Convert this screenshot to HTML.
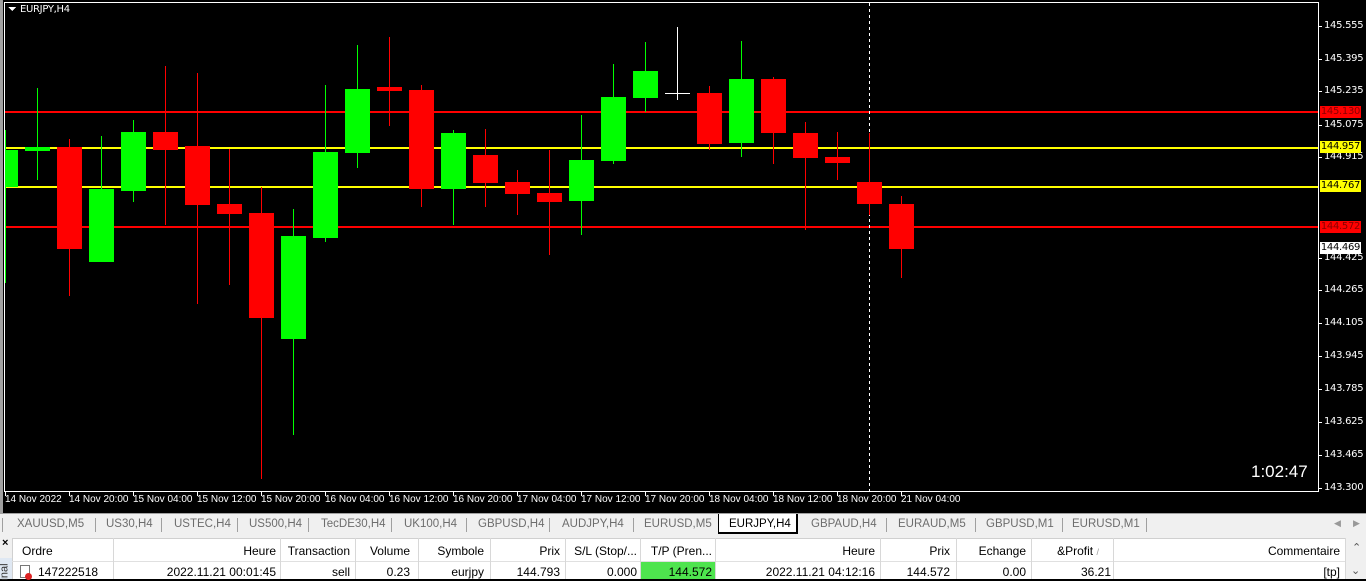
<!DOCTYPE html>
<html><head><meta charset="utf-8"><style>
*{margin:0;padding:0;box-sizing:border-box}
body{width:1366px;height:579px;overflow:hidden;background:#000;font-family:"Liberation Sans",sans-serif;position:relative}
.ax{position:absolute;color:#fff;font-size:10px;font-family:"DejaVu Sans","Liberation Sans",sans-serif;letter-spacing:-0.3px}
.tl{font-family:"Liberation Sans",sans-serif;letter-spacing:0}
.pl{left:1324px}
.tag{position:absolute;left:1320px;width:41px;height:12px;font-size:10px;font-family:"DejaVu Sans",sans-serif;line-height:12px;text-align:center;letter-spacing:-0.3px}
#tabs{position:absolute;left:0;top:513px;width:1366px;height:23px;background:#f0f0f0;border-top:1px solid #a0a0a0;font-size:11.5px;color:#6d6d6d}
#tabs span{position:absolute;top:4px}
.sep{position:absolute;top:4px;width:1px;height:14px;background:#a0a0a0}
#tbl{position:absolute;left:0;top:536px;width:1366px;height:43px;background:#f0f0f0}
.c{position:absolute;font-size:12px;color:#000;white-space:nowrap}
.vl{position:absolute;width:1px;background:#d8d8d8}
</style></head><body>
<svg width="1366" height="513" style="position:absolute;left:0;top:0" shape-rendering="crispEdges">
<rect width="1366" height="513" fill="#000"/>
<rect x="0" y="0" width="3" height="513" fill="#a0a0a0"/>
<rect x="4.5" y="2.5" width="1314" height="489" fill="none" stroke="#fff" stroke-width="1"/>
<g fill="#fff">
<rect x="1319" y="26" width="3" height="1"/><rect x="1319" y="59" width="3" height="1"/><rect x="1319" y="91" width="3" height="1"/><rect x="1319" y="125" width="3" height="1"/><rect x="1319" y="157" width="3" height="1"/><rect x="1319" y="258" width="3" height="1"/><rect x="1319" y="290" width="3" height="1"/><rect x="1319" y="323" width="3" height="1"/><rect x="1319" y="356" width="3" height="1"/><rect x="1319" y="389" width="3" height="1"/><rect x="1319" y="422" width="3" height="1"/><rect x="1319" y="455" width="3" height="1"/><rect x="1319" y="488" width="3" height="1"/>
<rect x="5" y="492" width="1" height="4"/><rect x="69" y="492" width="1" height="4"/><rect x="133" y="492" width="1" height="4"/><rect x="197" y="492" width="1" height="4"/><rect x="261" y="492" width="1" height="4"/><rect x="325" y="492" width="1" height="4"/><rect x="389" y="492" width="1" height="4"/><rect x="453" y="492" width="1" height="4"/><rect x="517" y="492" width="1" height="4"/><rect x="581" y="492" width="1" height="4"/><rect x="645" y="492" width="1" height="4"/><rect x="709" y="492" width="1" height="4"/><rect x="773" y="492" width="1" height="4"/><rect x="837" y="492" width="1" height="4"/><rect x="901" y="492" width="1" height="4"/>
</g>
<polygon points="8,7 16,7 12,11" fill="#fff"/>
<rect x="5" y="111" width="1313" height="2" fill="#f00"/>
<rect x="5" y="226" width="1313" height="2" fill="#f00"/>
<rect x="5" y="147" width="1313" height="2" fill="#ff0"/>
<rect x="5" y="186" width="1313" height="2" fill="#ff0"/>
<line x1="869.5" y1="3" x2="869.5" y2="491" stroke="#fff" stroke-dasharray="3,3"/>
<g fill="#0f0">
<rect x="5" y="130" width="1" height="153"/><rect x="5" y="150" width="13" height="37"/>
<rect x="37" y="88" width="1" height="92"/><rect x="25" y="147" width="25" height="4"/>
<rect x="101" y="136" width="1" height="126"/><rect x="89" y="189" width="25" height="73"/>
<rect x="133" y="120" width="1" height="82"/><rect x="121" y="132" width="25" height="59"/>
<rect x="293" y="209" width="1" height="226"/><rect x="281" y="236" width="25" height="103"/>
<rect x="325" y="85" width="1" height="157"/><rect x="313" y="152" width="25" height="86"/>
<rect x="357" y="45" width="1" height="123"/><rect x="345" y="89" width="25" height="64"/>
<rect x="453" y="130" width="1" height="95"/><rect x="441" y="133" width="25" height="56"/>
<rect x="581" y="115" width="1" height="120"/><rect x="569" y="160" width="25" height="41"/>
<rect x="613" y="64" width="1" height="100"/><rect x="601" y="97" width="25" height="64"/>
<rect x="645" y="42" width="1" height="70"/><rect x="633" y="71" width="25" height="27"/>
<rect x="741" y="41" width="1" height="116"/><rect x="729" y="79" width="25" height="64"/>
</g>
<g fill="#f00">
<rect x="69" y="139" width="1" height="157"/><rect x="57" y="147" width="25" height="102"/>
<rect x="165" y="66" width="1" height="159"/><rect x="153" y="132" width="25" height="18"/>
<rect x="197" y="73" width="1" height="231"/><rect x="185" y="146" width="25" height="59"/>
<rect x="229" y="149" width="1" height="136"/><rect x="217" y="204" width="25" height="10"/>
<rect x="261" y="187" width="1" height="292"/><rect x="249" y="213" width="25" height="105"/>
<rect x="389" y="37" width="1" height="89"/><rect x="377" y="87" width="25" height="4"/>
<rect x="421" y="85" width="1" height="122"/><rect x="409" y="90" width="25" height="99"/>
<rect x="485" y="129" width="1" height="78"/><rect x="473" y="155" width="25" height="28"/>
<rect x="517" y="170" width="1" height="45"/><rect x="505" y="182" width="25" height="12"/>
<rect x="549" y="150" width="1" height="105"/><rect x="537" y="193" width="25" height="9"/>
<rect x="709" y="86" width="1" height="64"/><rect x="697" y="93" width="25" height="51"/>
<rect x="773" y="77" width="1" height="87"/><rect x="761" y="79" width="25" height="54"/>
<rect x="805" y="122" width="1" height="108"/><rect x="793" y="133" width="25" height="25"/>
<rect x="837" y="132" width="1" height="48"/><rect x="825" y="157" width="25" height="6"/>
<rect x="869" y="133" width="1" height="82"/><rect x="857" y="182" width="25" height="22"/>
<rect x="901" y="196" width="1" height="82"/><rect x="889" y="204" width="25" height="45"/>
</g>
<rect x="677" y="27" width="1" height="73" fill="#fff"/><rect x="665" y="93" width="25" height="1" fill="#fff"/>
</svg>
<div class="ax" style="left:20px;top:4px">EURJPY,H4</div>
<div class="ax pl" style="top:20px">145.555</div>
<div class="ax pl" style="top:53px">145.395</div>
<div class="ax pl" style="top:85px">145.235</div>
<div class="ax pl" style="top:119px">145.075</div>
<div class="ax pl" style="top:151px">144.915</div>
<div class="ax pl" style="top:252px">144.425</div>
<div class="ax pl" style="top:284px">144.265</div>
<div class="ax pl" style="top:317px">144.105</div>
<div class="ax pl" style="top:350px">143.945</div>
<div class="ax pl" style="top:383px">143.785</div>
<div class="ax pl" style="top:416px">143.625</div>
<div class="ax pl" style="top:449px">143.465</div>
<div class="ax pl" style="top:482px">143.300</div>
<div class="tag" style="top:106px;background:#f00;color:#800">145.130</div>
<div class="tag" style="top:141px;background:#ff0;color:#000">144.957</div>
<div class="tag" style="top:180px;background:#ff0;color:#000">144.767</div>
<div class="tag" style="top:221px;background:#f00;color:#800">144.572</div>
<div class="tag" style="top:242px;background:#fff;color:#000">144.469</div>
<div class="ax" style="left:1251px;top:462px;font-size:17px;font-family:'Liberation Sans',sans-serif;letter-spacing:0">1:02:47</div>
<div class="ax tl" style="left:5px;top:494px">14 Nov 2022</div>
<div class="ax tl" style="left:69px;top:494px">14 Nov 20:00</div>
<div class="ax tl" style="left:133px;top:494px">15 Nov 04:00</div>
<div class="ax tl" style="left:197px;top:494px">15 Nov 12:00</div>
<div class="ax tl" style="left:261px;top:494px">15 Nov 20:00</div>
<div class="ax tl" style="left:325px;top:494px">16 Nov 04:00</div>
<div class="ax tl" style="left:389px;top:494px">16 Nov 12:00</div>
<div class="ax tl" style="left:453px;top:494px">16 Nov 20:00</div>
<div class="ax tl" style="left:517px;top:494px">17 Nov 04:00</div>
<div class="ax tl" style="left:581px;top:494px">17 Nov 12:00</div>
<div class="ax tl" style="left:645px;top:494px">17 Nov 20:00</div>
<div class="ax tl" style="left:709px;top:494px">18 Nov 04:00</div>
<div class="ax tl" style="left:773px;top:494px">18 Nov 12:00</div>
<div class="ax tl" style="left:837px;top:494px">18 Nov 20:00</div>
<div class="ax tl" style="left:901px;top:494px">21 Nov 04:00</div>

<div id="tabs">
<div class="sep" style="left:2px"></div>
<span style="left:17px">XAUUSD,M5</span><div class="sep" style="left:95px"></div>
<span style="left:106px">US30,H4</span><div class="sep" style="left:161px"></div>
<span style="left:174px">USTEC,H4</span><div class="sep" style="left:237px"></div>
<span style="left:249px">US500,H4</span><div class="sep" style="left:308px"></div>
<span style="left:321px">TecDE30,H4</span><div class="sep" style="left:391px"></div>
<span style="left:404px">UK100,H4</span><div class="sep" style="left:466px"></div>
<span style="left:478px">GBPUSD,H4</span><div class="sep" style="left:549px"></div>
<span style="left:562px">AUDJPY,H4</span><div class="sep" style="left:633px"></div>
<span style="left:644px">EURUSD,M5</span>
<div style="position:absolute;left:718px;top:0;width:80px;height:20px;background:#fff;border:1px solid #000;border-top:none;border-right:2px solid #000;border-bottom:2px solid #000"></div>
<span style="left:729px;color:#000">EURJPY,H4</span>
<span style="left:811px">GBPAUD,H4</span><div class="sep" style="left:886px"></div>
<span style="left:898px">EURAUD,M5</span><div class="sep" style="left:975px"></div>
<span style="left:986px">GBPUSD,M1</span><div class="sep" style="left:1062px"></div>
<span style="left:1072px">EURUSD,M1</span><div class="sep" style="left:1146px"></div>
<span style="left:1334px;font-size:9px;color:#999">◀</span><span style="left:1353px;font-size:9px;color:#999">▶</span>
</div>

<div id="tbl">
<div style="position:absolute;left:12px;top:2px;width:1334px;height:41px;background:#fff;border-top:1px solid #d0d0d0;border-left:1px solid #d0d0d0"></div>
<div style="position:absolute;left:12px;top:25px;width:1334px;height:1px;background:#e0e0e0"></div>
<div style="position:absolute;left:640px;top:26px;width:75px;height:17px;background:#4ee44e"></div>
<div class="vl" style="left:113px;top:2px;height:41px"></div>
<div class="vl" style="left:280px;top:2px;height:41px"></div>
<div class="vl" style="left:355px;top:2px;height:41px"></div>
<div class="vl" style="left:418px;top:2px;height:41px"></div>
<div class="vl" style="left:490px;top:2px;height:41px"></div>
<div class="vl" style="left:565px;top:2px;height:41px"></div>
<div class="vl" style="left:640px;top:2px;height:41px"></div>
<div class="vl" style="left:715px;top:2px;height:41px"></div>
<div class="vl" style="left:880px;top:2px;height:41px"></div>
<div class="vl" style="left:956px;top:2px;height:41px"></div>
<div class="vl" style="left:1031px;top:2px;height:41px"></div>
<div class="vl" style="left:1113px;top:2px;height:41px"></div>
<div class="vl" style="left:1345px;top:2px;height:41px"></div>
<div class="c" style="left:2px;top:1px;font-weight:bold;font-size:11px">×</div>
<div style="position:absolute;left:0;top:22px;width:12px;height:21px;background:#dfe8f3"></div>
<div class="c" style="left:-4px;top:30px;font-size:11px;color:#333;transform:rotate(-90deg)">inal</div>
<div class="c" style="left:22px;top:8px">Ordre</div>
<div class="c" style="left:113px;width:163px;text-align:right;top:8px">Heure</div>
<div class="c" style="left:280px;width:70px;text-align:right;top:8px">Transaction</div>
<div class="c" style="left:355px;width:55px;text-align:right;top:8px">Volume</div>
<div class="c" style="left:418px;width:66px;text-align:right;top:8px">Symbole</div>
<div class="c" style="left:490px;width:70px;text-align:right;top:8px">Prix</div>
<div class="c" style="left:565px;width:72px;text-align:right;top:8px">S/L (Stop/...</div>
<div class="c" style="left:640px;width:72px;text-align:right;top:8px">T/P (Pren...</div>
<div class="c" style="left:715px;width:160px;text-align:right;top:8px">Heure</div>
<div class="c" style="left:880px;width:70px;text-align:right;top:8px">Prix</div>
<div class="c" style="left:956px;width:70px;text-align:right;top:8px">Echange</div>
<div class="c" style="left:1031px;width:68px;text-align:right;top:8px">&amp;Profit <span style="color:#999;font-size:9px">/</span></div>
<div class="c" style="left:1113px;width:227px;text-align:right;top:8px">Commentaire</div>
<div class="c" style="left:1352px;top:5px;font-size:11px;color:#555">⌃</div>
<div style="position:absolute;left:20px;top:29px;width:10px;height:13px;border:1px solid #777;background:#fff"></div>
<div style="position:absolute;left:25px;top:37px;width:7px;height:7px;border-radius:50%;background:#d22"></div>
<div class="c" style="left:38px;top:29px">147222518</div>
<div class="c" style="left:113px;width:163px;text-align:right;top:29px">2022.11.21 00:01:45</div>
<div class="c" style="left:280px;width:70px;text-align:right;top:29px">sell</div>
<div class="c" style="left:355px;width:55px;text-align:right;top:29px">0.23</div>
<div class="c" style="left:418px;width:66px;text-align:right;top:29px">eurjpy</div>
<div class="c" style="left:490px;width:70px;text-align:right;top:29px">144.793</div>
<div class="c" style="left:565px;width:72px;text-align:right;top:29px">0.000</div>
<div class="c" style="left:640px;width:72px;text-align:right;top:29px">144.572</div>
<div class="c" style="left:715px;width:160px;text-align:right;top:29px">2022.11.21 04:12:16</div>
<div class="c" style="left:880px;width:70px;text-align:right;top:29px">144.572</div>
<div class="c" style="left:956px;width:70px;text-align:right;top:29px">0.00</div>
<div class="c" style="left:1031px;width:80px;text-align:right;top:29px">36.21</div>
<div class="c" style="left:1113px;width:227px;text-align:right;top:29px">[tp]</div>
<div class="c" style="left:1351px;top:28px;font-size:11px;color:#555">⌄</div>
</div>
</body></html>
